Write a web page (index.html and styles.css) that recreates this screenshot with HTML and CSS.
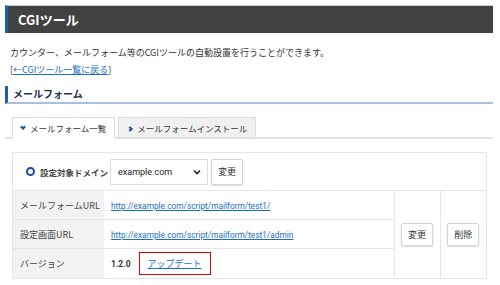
FILE: index.html
```html
<!DOCTYPE html>
<html lang="ja">

<head>
    <meta charset="UTF-8">
    <title>CGIツール</title>
    <link rel="stylesheet" href="styles.css">
</head>

<body>
    <div class="page">
        <h1 class="title">CGIツール</h1>
        <p class="lead">カウンター、メールフォーム等のCGIツールの自動設置を行うことができます。</p>
        <p class="back">[<a href="#">←CGIツール一覧に戻る</a>]</p>

        <h2 class="section">メールフォーム</h2>

        <div class="tabs">
            <div class="tab active"><span class="arrow down"></span>メールフォーム一覧</div>
            <div class="tab"><span class="arrow"></span>メールフォームインストール</div>
        </div>

        <div class="box">
            <div class="domain">
                <span class="ring"></span>
                <span class="domain-label">設定対象ドメイン</span>
                <div class="select">example.com
                    <svg width="8" height="6" viewBox="0 0 8 6"><path d="M1 1.5l3 3 3-3" fill="none" stroke="#222" stroke-width="1.6"/></svg>
                </div>
                <button class="btn">変更</button>
            </div>
            <table class="list">
                <tr>
                    <th>メールフォームURL</th>
                    <td><a href="#">http://example.com/script/mailform/test1/</a></td>
                    <td class="act" rowspan="3"><button class="btn">変更</button></td>
                    <td class="act" rowspan="3"><button class="btn">削除</button></td>
                </tr>
                <tr>
                    <th>設定画面URL</th>
                    <td><a href="#">http://example.com/script/mailform/test1/admin</a></td>
                </tr>
                <tr>
                    <th>バージョン</th>
                    <td><span class="ver">1.2.0</span><a class="update" href="#">アップデート</a></td>
                </tr>
            </table>
        </div>
    </div>
</body>

</html>
```

FILE: styles.css
```css
* {
    box-sizing: border-box;
}

body {
    margin: 0;
    background: #fff;
    font-family: "Noto Sans CJK JP", "Roboto", sans-serif;
    font-size: 9px;
    color: #333;
}

a {
    color: #1a6fc4;
}

.page {
    padding: 5px 7px 0 5px;
}

.title {
    margin: 0;
    height: 28px;
    padding-left: 10px;
    background: #424242;
    border-left: 3px solid #1c5bb0;
    border-top: 1px solid #ccc;
    color: #fff;
    font-size: 13px;
    line-height: 27px;
    font-weight: bold;
}

.lead {
    margin: 12px 0 0 5px;
    line-height: 15px;
}

.back {
    margin: 2px 0 0 5px;
    line-height: 15px;
}

.section {
    margin: 9px 0 0;
    height: 18px;
    padding-left: 5px;
    border-left: 3px solid #1c5bb0;
    border-bottom: 2px solid #a8c0de;
    color: #1e2f4f;
    font-size: 10px;
    font-weight: bold;
    line-height: 15px;
}

.tabs {
    display: flex;
    gap: 3px;
    margin-top: 13px;
    padding-left: 7px;
    border-bottom: 2px solid #e2e2e2;
}

.tab {
    height: 22px;
    padding: 0 8px 0 9px;
    border: 1px solid #ddd;
    background: #f0f0f0;
    line-height: 20px;
    margin-bottom: -2px;
    border-bottom: 2px solid #e2e2e2;
    white-space: nowrap;
    font-size: 8.5px;
}

.tab.active {
    padding-left: 8px;
    background: #fff;
    border-bottom-color: #fff;
}

.arrow {
    display: inline-block;
    width: 4px;
    height: 4px;
    margin: 0 5px 1px 0;
    border-right: 2px solid #1c4f98;
    border-bottom: 2px solid #1c4f98;
    transform: rotate(-45deg);
}

.arrow.down {
    transform: rotate(45deg);
    margin-bottom: 3px;
}

.box {
    margin: 13px 6px 0 7px;
    border: 1px solid #e6e6e6;
}

.domain {
    display: flex;
    align-items: center;
    height: 37px;
    padding-left: 13px;
}

.ring {
    width: 9px;
    height: 9px;
    border: 2px solid #1c4f98;
    border-radius: 50%;
}

.domain-label {
    margin-left: 5px;
    font-size: 8.5px;
    font-weight: bold;
    color: #444;
}

.select {
    display: flex;
    align-items: center;
    justify-content: space-between;
    width: 98px;
    height: 26px;
    margin-left: 2px;
    padding: 0 6px 0 7px;
    border: 1px solid #ddd;
    font-family: "Roboto", sans-serif;
    font-size: 9px;
    color: #222;
}

.btn {
    height: 26px;
    padding: 0 6px;
    margin-left: 3px;
    border: 1px solid #d4d4d4;
    border-radius: 2px;
    background: #fff;
    box-shadow: 0 1px 2px rgba(0, 0, 0, 0.15);
    font-family: "Noto Sans CJK JP", sans-serif;
    font-size: 9px;
    color: #333;
}

.list {
    width: 100%;
    border-collapse: collapse;
}

.list th,
.list td {
    height: 29px;
    border-top: 1px solid #e6e6e6;
    padding: 0 7px;
    text-align: left;
    white-space: nowrap;
}

.list th {
    width: 91px;
    padding-right: 2px;
    background: #f2f2f2;
    font-weight: normal;
    color: #444;
}

.list td a {
    font-family: "Roboto", sans-serif;
    font-size: 8.3px;
}

.list td.act {
    width: 46px;
    padding: 0;
    text-align: center;
    border-left: 1px solid #e6e6e6;
}

.list td.act .btn {
    margin: 0;
    height: 23px;
    padding: 0 6px;
}

.ver {
    font-family: "Roboto", sans-serif;
    font-size: 8.5px;
    font-weight: bold;
    margin-right: 8px;
}

.list td a.update {
    display: inline-block;
    padding: 4px 8px;
    border: 1px solid #e00000;
    font-family: "Noto Sans CJK JP", sans-serif;
    font-size: 9px;
}
```
